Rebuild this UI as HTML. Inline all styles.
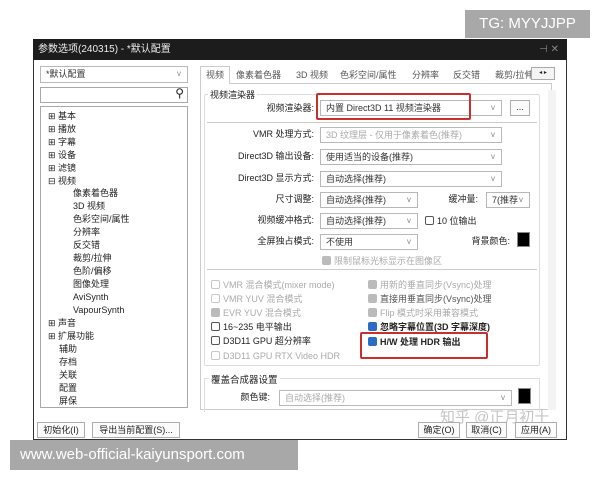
<!DOCTYPE html>
<html><head><meta charset="utf-8"><style>
*{margin:0;padding:0;box-sizing:border-box}
body{width:600px;height:480px;background:#fff;position:relative;overflow:hidden;font-family:"Liberation Sans","Noto Sans CJK SC",sans-serif;font-size:9px;color:#222}
.a{position:absolute;white-space:nowrap}
.box{position:absolute;border:1px solid #a8a8a8;background:#fff}
.cb{position:absolute;border:1px solid #b8b8b8;background:#fff;height:16px;font-size:9px;padding-left:5px;line-height:14px;color:#333;overflow:hidden}
.cb .v{position:absolute;right:6px;top:0;color:#888;font-size:8px;background:#fff}
.dis{color:#aaa}
.lbl{position:absolute;text-align:right;font-size:9px;line-height:14px}
.chk{position:absolute;font-size:9px;line-height:12px;white-space:nowrap}
.chk i{display:inline-block;width:9px;height:9px;border:1px solid #555;border-radius:2px;vertical-align:-1px;margin-right:3px;background:#fff}
.chk i.g{border-color:#c8c8c8}
.chk i.f{background:#bbb;border-color:#bbb}
.chk i.b{background:#2b6cc4;border-color:#2b6cc4}
.btn{position:absolute;border:1px solid #adadad;background:#fbfbfb;font-size:9px;text-align:center;line-height:14px;height:16px}
.tree div{position:absolute;font-size:9px;line-height:12px;white-space:nowrap}
.tab{position:absolute;top:68px;font-size:9px;color:#555;white-space:nowrap}
</style></head><body>
<div class="a" style="left:465px;top:10px;width:125px;height:28px;background:#a8a8a8;color:#fff;font-size:15px;line-height:28px;text-align:center">TG: MYYJJPP</div>

<div class="a" style="left:33px;top:39px;width:534px;height:401px;background:#fff;border:1px solid #333"></div>
<div class="a" style="left:33px;top:39px;width:534px;height:21px;background:#1c1c1c;color:#eee;font-size:10px;line-height:21px;padding-left:5px">参数选项(240315) - *默认配置<span style="position:absolute;right:8px;color:#888">⊣ ✕</span></div>

<div class="cb" style="left:40px;top:66px;width:148px;height:17px">*默认配置<span class="v">v</span></div>
<div class="box" style="left:40px;top:87px;width:148px;height:16px"><span class="a" style="right:3px;top:-2px;font-size:12px">⚲</span></div>
<div class="box tree" style="left:40px;top:106px;width:148px;height:302px">
<div style="left:7px;top:3px">⊞ 基本</div><div style="left:7px;top:16px">⊞ 播放</div><div style="left:7px;top:29px">⊞ 字幕</div><div style="left:7px;top:42px">⊞ 设备</div><div style="left:7px;top:55px">⊞ 滤镜</div><div style="left:7px;top:68px">⊟ 视频</div>
<div style="left:32px;top:80px">像素着色器</div><div style="left:32px;top:93px">3D 视频</div><div style="left:32px;top:106px">色彩空间/属性</div><div style="left:32px;top:119px">分辨率</div><div style="left:32px;top:132px">反交错</div><div style="left:32px;top:145px">裁剪/拉伸</div><div style="left:32px;top:158px">色阶/偏移</div><div style="left:32px;top:171px">图像处理</div><div style="left:32px;top:184px">AviSynth</div><div style="left:32px;top:197px">VapourSynth</div>
<div style="left:7px;top:210px">⊞ 声音</div><div style="left:7px;top:223px">⊞ 扩展功能</div><div style="left:18px;top:236px">辅助</div><div style="left:18px;top:249px">存档</div><div style="left:18px;top:262px">关联</div><div style="left:18px;top:275px">配置</div><div style="left:18px;top:288px">屏保</div>
</div>

<div class="a" style="left:200px;top:83px;width:352px;height:327px;border:1px solid #ccc;background:#fff"></div>
<div class="a" style="left:200px;top:66px;width:30px;height:18px;border:1px solid #ccc;border-bottom:none;background:#fff;font-size:9px;text-align:center;line-height:16px;color:#555">视频</div>
<div class="tab" style="left:236px">像素着色器</div>
<div class="tab" style="left:296px">3D 视频</div>
<div class="tab" style="left:340px">色彩空间/属性</div>
<div class="tab" style="left:412px">分辨率</div>
<div class="tab" style="left:453px">反交错</div>
<div class="tab" style="left:495px;width:36px;overflow:hidden">裁剪/拉伸</div>
<div class="a" style="left:531px;top:67px;width:24px;height:13px;border:1px solid #aaa;background:#f4f4f4;font-size:6px;line-height:11px;text-align:center">◂ ▸</div>
<div class="a" style="left:548px;top:90px;width:8px;height:320px;background:#f4f4f4"></div>

<div class="a" style="left:204px;top:94px;width:336px;height:272px;border:1px solid #ddd;border-radius:2px"></div>
<div class="a" style="left:208px;top:88px;background:#fff;padding:0 2px;font-size:9px">视频渲染器</div>
<div class="lbl" style="left:210px;top:101px;width:104px">视频渲染器:</div>
<div class="cb" style="left:320px;top:100px;width:182px">内置 Direct3D 11 视频渲染器<span class="v">v</span></div>
<div class="btn" style="left:510px;top:100px;width:20px;height:16px;line-height:12px">...</div>
<div class="a" style="left:316px;top:93px;width:155px;height:27px;border:2px solid #c9302c;border-radius:2px"></div>
<div class="a" style="left:207px;top:122px;width:330px;border-top:1px solid #ccc"></div>

<div class="lbl" style="left:210px;top:127px;width:104px">VMR 处理方式:</div>
<div class="cb dis" style="left:320px;top:127px;width:182px">3D 纹理层 - 仅用于像素着色(推荐)<span class="v">v</span></div>
<div class="lbl" style="left:210px;top:149px;width:104px">Direct3D 输出设备:</div>
<div class="cb" style="left:320px;top:149px;width:182px">使用适当的设备(推荐)<span class="v">v</span></div>
<div class="lbl" style="left:210px;top:171px;width:104px">Direct3D 显示方式:</div>
<div class="cb" style="left:320px;top:171px;width:182px">自动选择(推荐)<span class="v">v</span></div>
<div class="lbl" style="left:210px;top:192px;width:104px">尺寸调整:</div>
<div class="cb" style="left:320px;top:192px;width:98px">自动选择(推荐)<span class="v">v</span></div>
<div class="lbl" style="left:430px;top:192px;width:48px">缓冲量:</div>
<div class="cb" style="left:486px;top:192px;width:44px">7(推荐<span class="v">v</span></div>
<div class="lbl" style="left:210px;top:213px;width:104px">视频缓冲格式:</div>
<div class="cb" style="left:320px;top:213px;width:98px">自动选择(推荐)<span class="v">v</span></div>
<div class="chk" style="left:425px;top:215px"><i></i>10 位输出</div>
<div class="lbl" style="left:450px;top:234px;width:60px">背景颜色:</div>
<div class="lbl" style="left:210px;top:234px;width:104px">全屏独占模式:</div>
<div class="cb" style="left:320px;top:234px;width:98px">不使用<span class="v">v</span></div>
<div class="a" style="left:517px;top:232px;width:13px;height:15px;background:#000;border:1px solid #888"></div>
<div class="chk dis" style="left:322px;top:255px"><i class="f"></i>限制鼠标光标显示在图像区</div>
<div class="a" style="left:207px;top:269px;width:330px;border-top:1px solid #ccc"></div>

<div class="chk dis" style="left:211px;top:279px"><i class="g"></i>VMR 混合模式(mixer mode)</div>
<div class="chk dis" style="left:211px;top:293px"><i class="g"></i>VMR YUV 混合模式</div>
<div class="chk dis" style="left:211px;top:307px"><i class="f"></i>EVR YUV 混合模式</div>
<div class="chk" style="left:211px;top:321px"><i></i>16~235 电平输出</div>
<div class="chk" style="left:211px;top:335px"><i></i>D3D11 GPU 超分辨率</div>
<div class="chk dis" style="left:211px;top:350px"><i class="g"></i>D3D11 GPU RTX Video HDR</div>
<div class="chk dis" style="left:368px;top:279px"><i class="f"></i>用新的垂直同步(Vsync)处理</div>
<div class="chk" style="left:368px;top:293px;color:#555"><i class="f"></i>直接用垂直同步(Vsync)处理</div>
<div class="chk dis" style="left:368px;top:307px"><i class="f"></i>Flip 模式时采用兼容模式</div>
<div class="chk" style="left:368px;top:321px;font-weight:bold"><i class="b"></i>忽略字幕位置(3D 字幕深度)</div>
<div class="chk" style="left:368px;top:336px;font-weight:bold"><i class="b"></i>H/W 处理 HDR 输出</div>
<div class="a" style="left:360px;top:332px;width:128px;height:27px;border:2px solid #c9302c;border-radius:2px"></div>

<div class="a" style="left:204px;top:378px;width:336px;height:34px;border:1px solid #ddd;border-bottom:none"></div>
<div class="a" style="left:209px;top:372px;background:#fff;padding:0 2px;font-size:9.5px">覆盖合成器设置</div>
<div class="lbl" style="left:220px;top:390px;width:50px">颜色键:</div>
<div class="cb dis" style="left:279px;top:390px;width:233px">自动选择(推荐)<span class="v">v</span></div>
<div class="a" style="left:518px;top:388px;width:13px;height:16px;background:#000;border:1px solid #888"></div>

<div class="a" style="left:440px;top:406px;font-size:15px;color:rgba(150,150,150,.55)">知乎 @正月初十</div>

<div class="btn" style="left:37px;top:422px;width:48px">初始化(I)</div>
<div class="btn" style="left:92px;top:422px;width:88px">导出当前配置(S)...</div>
<div class="btn" style="left:418px;top:422px;width:42px">确定(O)</div>
<div class="btn" style="left:466px;top:422px;width:41px">取消(C)</div>
<div class="btn" style="left:515px;top:422px;width:42px">应用(A)</div>

<div class="a" style="left:10px;top:440px;width:288px;height:30px;background:#a8a8a8;color:#fff;font-size:15px;line-height:30px;padding-left:10px">www.web-official-kaiyunsport.com</div>
</body></html>
